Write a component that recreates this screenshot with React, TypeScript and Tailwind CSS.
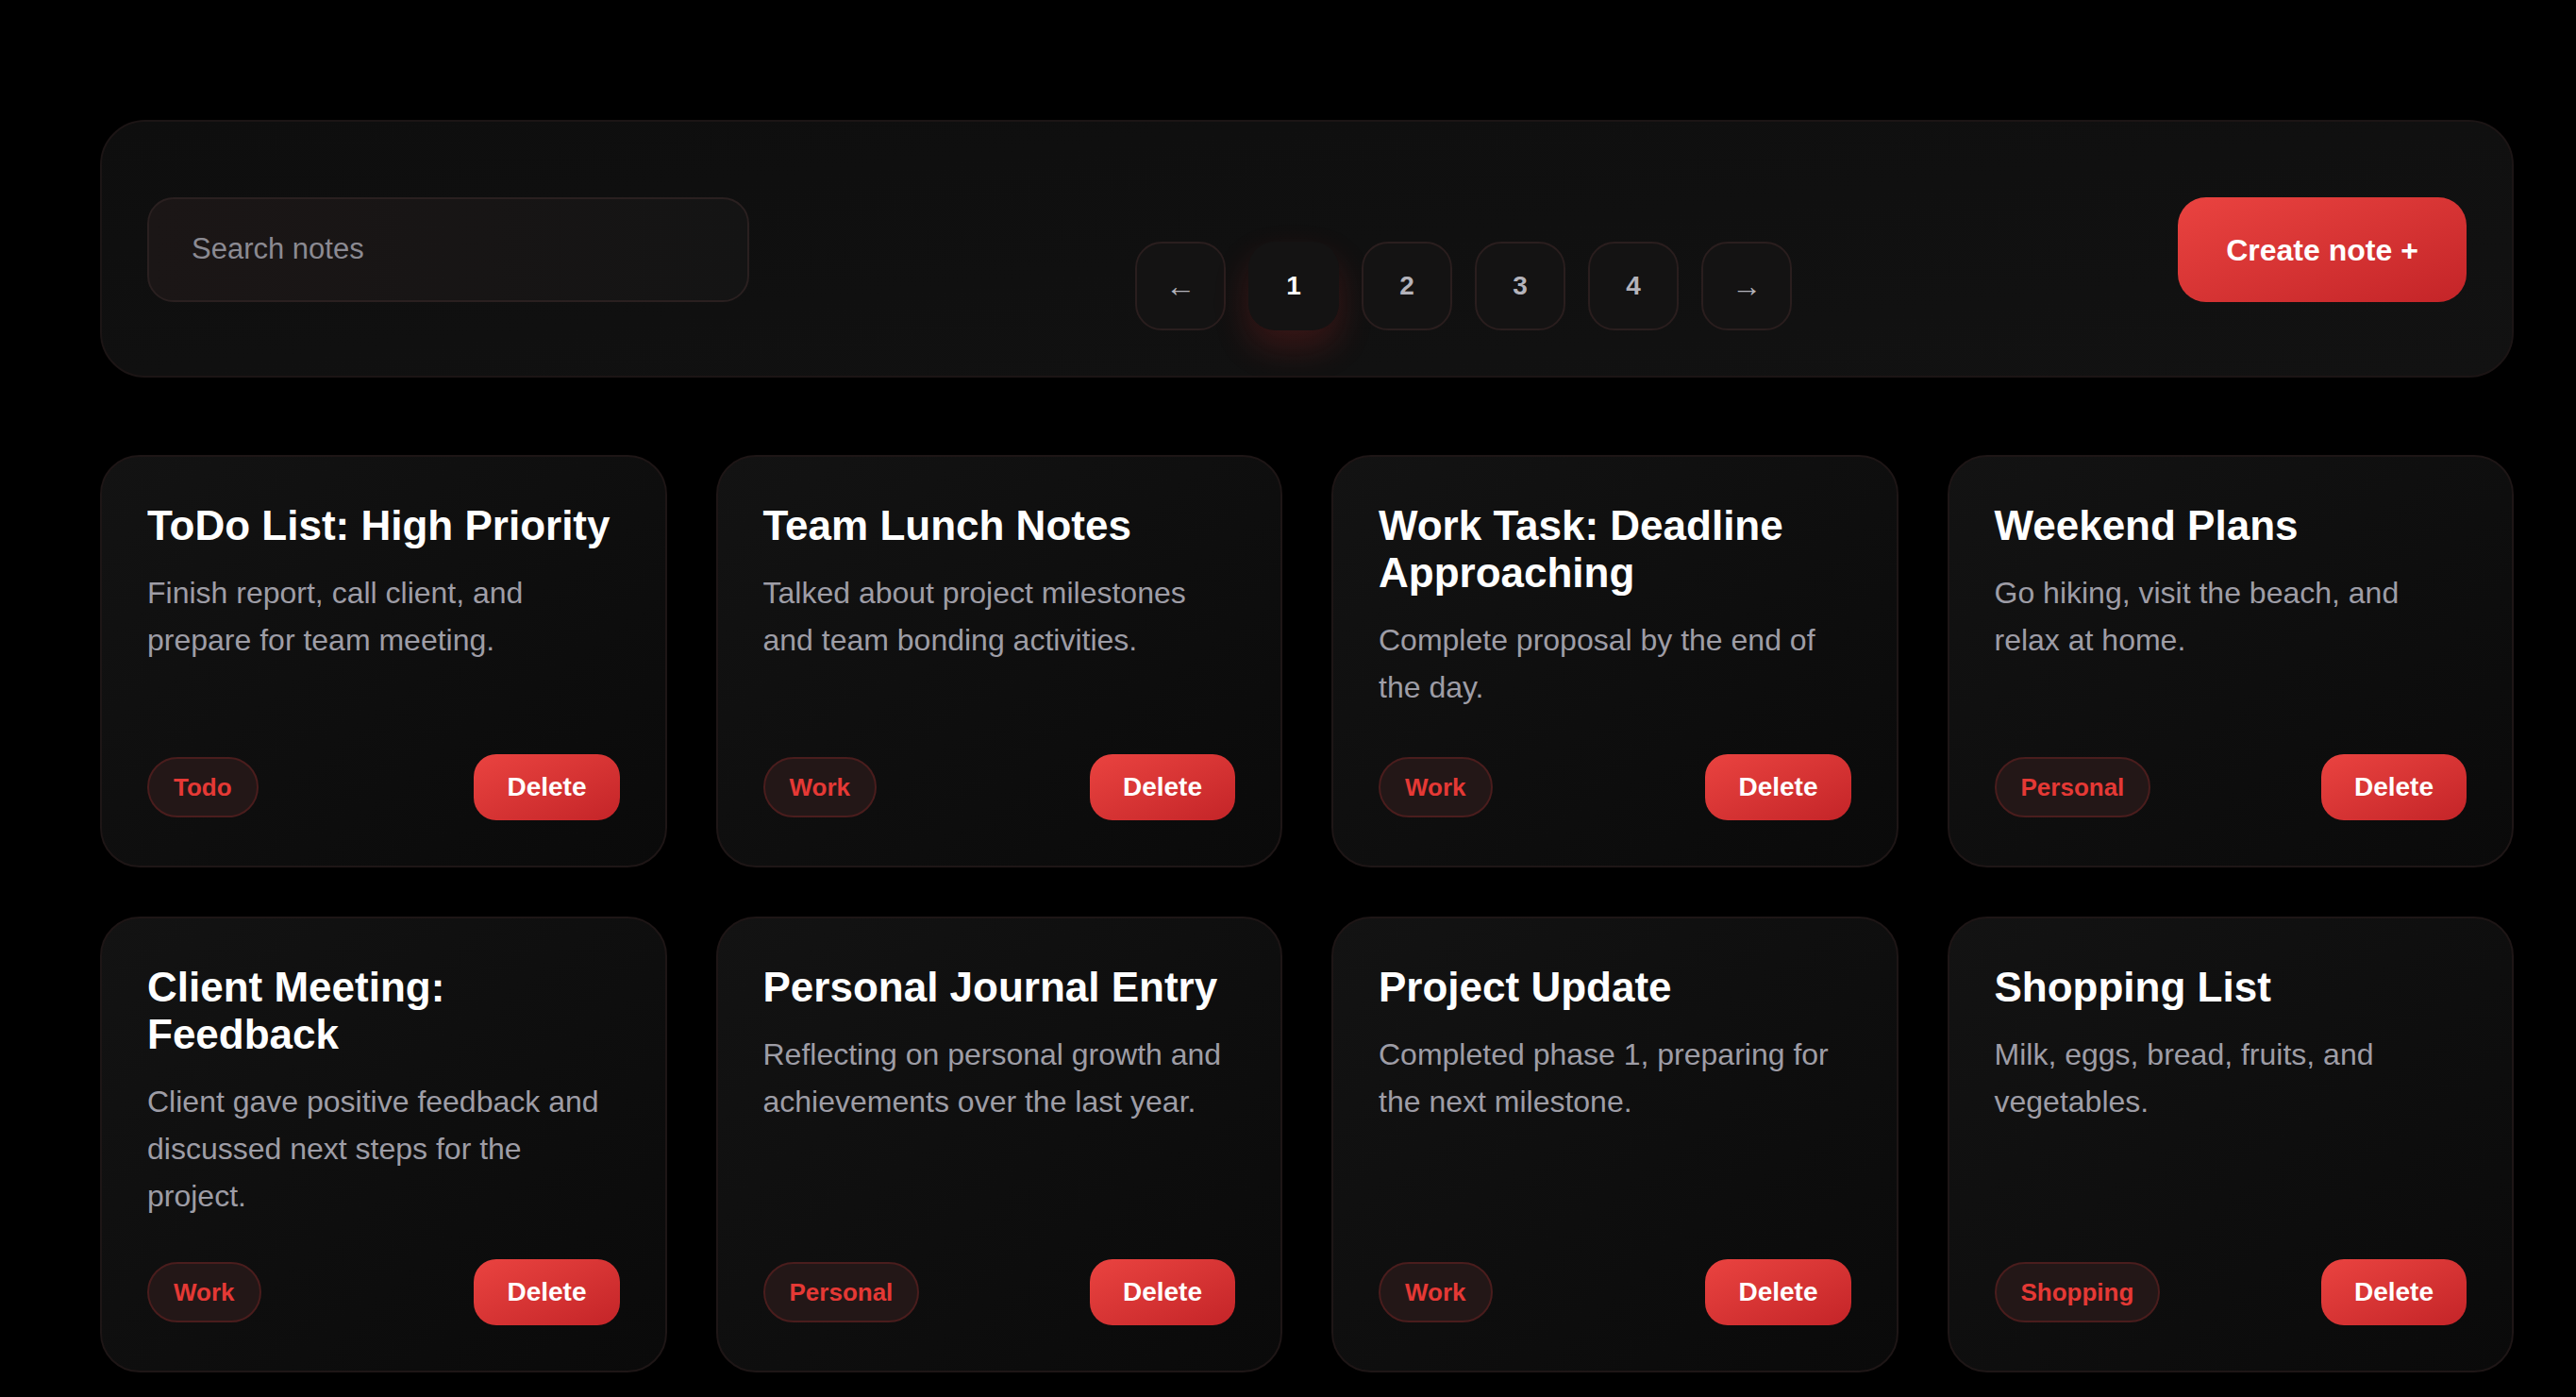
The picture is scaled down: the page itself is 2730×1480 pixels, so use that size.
import React from 'react';

type Note = {
  title: string;
  body: string;
  tag: string;
};

const notes: Note[] = [
  { title: 'ToDo List: High Priority', body: 'Finish report, call client, and prepare for team meeting.', tag: 'Todo' },
  { title: 'Team Lunch Notes', body: 'Talked about project milestones and team bonding activities.', tag: 'Work' },
  { title: 'Work Task: Deadline Approaching', body: 'Complete proposal by the end of the day.', tag: 'Work' },
  { title: 'Weekend Plans', body: 'Go hiking, visit the beach, and relax at home.', tag: 'Personal' },
  { title: 'Client Meeting: Feedback', body: 'Client gave positive feedback and discussed next steps for the project.', tag: 'Work' },
  { title: 'Personal Journal Entry', body: 'Reflecting on personal growth and achievements over the last year.', tag: 'Personal' },
  { title: 'Project Update', body: 'Completed phase 1, preparing for the next milestone.', tag: 'Work' },
  { title: 'Shopping List', body: 'Milk, eggs, bread, fruits, and vegetables.', tag: 'Shopping' },
];

const pages = ['←', '1', '2', '3', '4', '→'];

function NoteCard({ note }: { note: Note }) {
  return (
    <div className="flex min-h-[437px] flex-col rounded-[42px] border-2 border-[#1e1616] bg-gradient-to-br from-[#131313] to-[#0a0a0a] p-[48px]">
      <h3 className="text-[44px] leading-[50px] font-bold text-white">{note.title}</h3>
      <p className="mt-[21px] text-[32px] leading-[50px] text-[#9e9da6]">{note.body}</p>
      <div className="mt-auto pt-[42px] flex items-center justify-between">
        <span className="flex h-[64px] items-center rounded-full border-2 border-[#4a1d1d] bg-[#231717] px-[26px] text-[26px] font-bold text-[#e53935]">
          {note.tag}
        </span>
        <button className="h-[70px] rounded-[24px] bg-gradient-to-br from-[#ea4340] to-[#c42428] px-[35px] text-[28px] font-bold text-white">
          Delete
        </button>
      </div>
    </div>
  );
}

export default function App() {
  return (
    <div className="min-h-screen bg-black pt-[127px] pb-[60px] pl-[106px] pr-[66px] font-['Liberation_Sans',Arial,sans-serif]">
      {/* top bar */}
      <div className="flex items-start justify-between rounded-[48px] border-2 border-[#1c1515] bg-gradient-to-br from-[#0e0e0e] to-[#121212] px-[48px] pt-[80px] pb-[48px]">
        <div className="flex h-[111px] w-[638px] items-center rounded-[28px] border-2 border-[#2a2020] bg-gradient-to-r from-[#1b1616] to-[#141414] px-[45px]">
          <span className="text-[31px] text-[#8b8a92]">Search notes</span>
        </div>

        <div className="mt-[47px] flex gap-[24px]">
          {pages.map((p) =>
            p === '1' ? (
              <button
                key={p}
                className="flex h-[94px] w-[96px] items-center justify-center rounded-[28px] bg-[#141313] text-[28px] font-bold text-white shadow-[0_18px_36px_rgba(200,40,40,0.22)]"
              >
                {p}
              </button>
            ) : (
              <button
                key={p}
                className={`flex h-[94px] w-[96px] items-center justify-center rounded-[28px] border-2 border-[#2a1e1e] bg-[#141313] font-bold text-[#b4b3bb] ${
                  p === '←' || p === '→' ? 'text-[32px]' : 'text-[28px]'
                }`}
              >
                {p}
              </button>
            )
          )}
        </div>

        <button className="h-[111px] w-[306px] rounded-[30px] bg-gradient-to-br from-[#ea4340] to-[#c42428] text-[32px] font-bold text-white">
          Create note +
        </button>
      </div>

      {/* notes */}
      <div className="mt-[82px] grid grid-cols-4 gap-[52px]">
        {notes.map((n) => (
          <NoteCard key={n.title} note={n} />
        ))}
      </div>
    </div>
  );
}
